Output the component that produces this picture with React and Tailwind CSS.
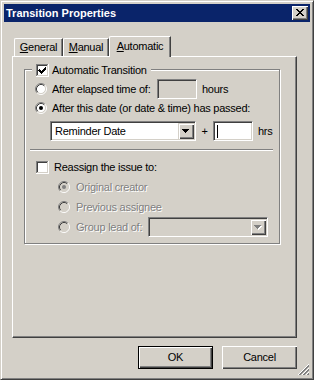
import React from "react";

const sunken =
  "border border-t-[#808080] border-l-[#808080] border-r-white border-b-white shadow-[inset_1px_1px_#404040,inset_-1px_-1px_#d4d0c8]";
const raised =
  "shadow-[inset_1px_1px_#d4d0c8,inset_2px_2px_#fff,inset_-1px_-1px_#404040,inset_-2px_-2px_#808080]";
const dim = "text-[#808080] [text-shadow:1px_1px_0_#fff]";

function Radio({ checked, disabled }) {
  return (
    <svg width="12" height="12" viewBox="0 0 12 12" className="shrink-0">
      <circle cx="6" cy="6" r="4.5" fill={disabled ? "#d4d0c8" : "#fff"} />
      <path d="M2.11 9.89A5.5 5.5 0 0 1 9.89 2.11" fill="none" stroke="#808080" />
      <path d="M9.89 2.11A5.5 5.5 0 0 1 2.11 9.89" fill="none" stroke="#fff" />
      <path d="M2.82 9.18A4.5 4.5 0 0 1 9.18 2.82" fill="none" stroke="#404040" />
      <path d="M9.18 2.82A4.5 4.5 0 0 1 2.82 9.18" fill="none" stroke="#d4d0c8" />
      {checked && (
        <circle cx="6" cy="6" r="2" fill={disabled ? "#808080" : "#000"} />
      )}
    </svg>
  );
}

function Check({ checked }) {
  return (
    <svg width="13" height="13" viewBox="0 0 13 13" className="shrink-0" shapeRendering="crispEdges">
      <rect x="0" y="0" width="13" height="13" fill="#fff" />
      <rect x="0" y="0" width="12" height="1" fill="#808080" />
      <rect x="0" y="0" width="1" height="12" fill="#808080" />
      <rect x="1" y="1" width="10" height="1" fill="#404040" />
      <rect x="1" y="1" width="1" height="10" fill="#404040" />
      <rect x="1" y="11" width="11" height="1" fill="#d4d0c8" />
      <rect x="11" y="1" width="1" height="11" fill="#d4d0c8" />
      {checked && (
        <path
          d="M3 5h1v1h1v1h1v-1h1v-1h1v-1h1v-1h1v3h-1v1h-1v1h-1v1h-1v1h-1v-1h-1v-1h-1v-1h-1z"
          fill="#000"
        />
      )}
    </svg>
  );
}

function Arrow({ disabled }) {
  const c = disabled ? "#808080" : "#000";
  return (
    <svg width="8" height="5" viewBox="0 0 8 5" shapeRendering="crispEdges">
      {disabled && (
        <g fill="#fff">
          <rect x="1" y="1" width="7" height="1" />
          <rect x="2" y="2" width="5" height="1" />
          <rect x="3" y="3" width="3" height="1" />
          <rect x="4" y="4" width="1" height="1" />
        </g>
      )}
      <g fill={c}>
        <rect x="0" y="0" width="7" height="1" />
        <rect x="1" y="1" width="5" height="1" />
        <rect x="2" y="2" width="3" height="1" />
        <rect x="3" y="3" width="1" height="1" />
      </g>
    </svg>
  );
}

function Combo({ width, text, disabled }) {
  return (
    <div
      className={`${sunken} ${width} h-[20px] flex items-center p-[1px] ${
        disabled ? "bg-[#d4d0c8]" : "bg-white"
      }`}
    >
      <span className="flex-1 pl-[3px]">{text}</span>
      <div className={`${raised} bg-[#d4d0c8] w-[16px] h-[16px] flex items-center justify-center`}>
        <Arrow disabled={disabled} />
      </div>
    </div>
  );
}

export default function App() {
  return (
    <div className="w-[314px] h-[380px] bg-[#d4d0c8] font-['Liberation_Sans',Arial,sans-serif] text-[11px] leading-none tracking-[-0.25px] text-black select-none">
      <div className="relative w-full h-full border border-t-[#d4d0c8] border-l-[#d4d0c8] border-r-[#404040] border-b-[#404040] shadow-[inset_1px_1px_#fff,inset_-1px_-1px_#808080] p-[3px] flex flex-col">
        {/* title bar */}
        <div className="h-[18px] bg-[#0a246a] flex items-center justify-between pl-[2px] pr-[2px]">
          <span className="text-white font-bold tracking-normal">Transition Properties</span>
          <div className="w-[16px] h-[14px] bg-[#d4d0c8] flex items-start justify-center pt-[3px] shadow-[inset_1px_1px_#fff,inset_-1px_-1px_#404040,inset_-2px_-2px_#808080]">
            <svg width="8" height="7" viewBox="0 0 8 7" shapeRendering="crispEdges">
              <g fill="#000">
                <rect x="0" y="0" width="2" height="1" />
                <rect x="6" y="0" width="2" height="1" />
                <rect x="1" y="1" width="2" height="1" />
                <rect x="5" y="1" width="2" height="1" />
                <rect x="2" y="2" width="4" height="1" />
                <rect x="3" y="3" width="2" height="1" />
                <rect x="2" y="4" width="4" height="1" />
                <rect x="1" y="5" width="2" height="1" />
                <rect x="5" y="5" width="2" height="1" />
                <rect x="0" y="6" width="2" height="1" />
                <rect x="6" y="6" width="2" height="1" />
              </g>
            </svg>
          </div>
        </div>

        {/* tabs */}
        <div className="mt-[14px] h-[20px] flex items-end pl-[10px]">
          <div className="w-[49px] h-[18px] border-t border-l border-white border-r border-r-[#404040] shadow-[inset_-1px_0_#808080] rounded-tl-[2px] flex items-center justify-center">
            <span><u>G</u>eneral</span>
          </div>
          <div className="w-[46px] h-[18px] border-t border-l border-white border-r border-r-[#404040] shadow-[inset_-1px_0_#808080] rounded-tl-[2px] flex items-center justify-center">
            <span><u>M</u>anual</span>
          </div>
          <div className="relative w-[62px] h-[21px] -mb-px bg-[#d4d0c8] border-t border-l border-white border-r border-r-[#404040] shadow-[inset_-1px_0_#808080] rounded-tl-[2px] flex items-center justify-center pb-[2px]">
            <span><u>A</u>utomatic</span>
          </div>
        </div>

        {/* tab panel */}
        <div className="ml-[8px] w-[285px] h-[282px] border border-t-white border-l-white border-r-[#404040] border-b-[#404040] shadow-[inset_-1px_-1px_#808080] pt-[12px] pl-[11px]">
          <div className="w-[256px] h-[175px] border border-[#808080] shadow-[1px_1px_#fff,inset_1px_1px_#fff] flex flex-col">
            <div className="-mt-[6px] ml-[7px] self-start px-[4px] h-[13px] bg-[#d4d0c8] flex items-center gap-[3px]">
              <Check checked />
              <span>Automatic Transition</span>
            </div>

            <div className="mt-[2px] h-[20px] pl-[10px] flex items-center">
              <Radio />
              <span className="ml-[5px] w-[105px]">After elapsed time of:</span>
              <div className={`${sunken} w-[40px] h-[20px] bg-[#d4d0c8]`} />
              <span className="ml-[5px]">hours</span>
            </div>

            <div className="h-[18px] pl-[10px] flex items-center">
              <Radio checked />
              <span className="ml-[5px]">After this date (or date &amp; time) has passed:</span>
            </div>

            <div className="mt-[4px] h-[20px] pl-[25px] flex items-center">
              <Combo width="w-[146px]" text="Reminder Date" />
              <span className="w-[17px] text-center">+</span>
              <div className={`${sunken} w-[40px] h-[20px] bg-white flex items-center pl-[3px]`}>
                <div className="w-px h-[13px] bg-black" />
              </div>
              <span className="ml-[5px]">hrs</span>
            </div>

            <div className="mt-[8px] ml-[5px] w-[243px] h-[2px] border-t border-t-[#808080] border-b border-b-white" />

            <div className="mt-[10px] h-[13px] pl-[11px] flex items-center">
              <Check />
              <span className="ml-[5px]">Reassign the issue to:</span>
            </div>

            <div className="mt-[3px] h-[20px] pl-[33px] flex items-center">
              <Radio checked disabled />
              <span className={`ml-[6px] ${dim}`}>Original creator</span>
            </div>
            <div className="h-[20px] pl-[33px] flex items-center">
              <Radio disabled />
              <span className={`ml-[6px] ${dim}`}>Previous assignee</span>
            </div>
            <div className="h-[20px] pl-[33px] flex items-center">
              <Radio disabled />
              <span className={`ml-[6px] w-[72px] ${dim}`}>Group lead of:</span>
              <Combo width="w-[120px]" text="" disabled />
            </div>
          </div>
        </div>

        {/* buttons */}
        <div className="mt-[8px] flex justify-end gap-[9px] pr-[13px]">
          <div className="w-[75px] h-[23px] border border-black bg-[#d4d0c8] shadow-[inset_1px_1px_#fff,inset_-1px_-1px_#404040,inset_-2px_-2px_#808080] flex items-center justify-center">
            OK
          </div>
          <div className="w-[75px] h-[23px] bg-[#d4d0c8] shadow-[inset_1px_1px_#fff,inset_-1px_-1px_#404040,inset_-2px_-2px_#808080] flex items-center justify-center">
            Cancel
          </div>
        </div>

        {/* size grip */}
        <svg
          className="absolute right-[3px] bottom-[3px]"
          width="12"
          height="12"
          viewBox="0 0 12 12"
        >
          <path d="M11 1L1 11M11 2L2 11" stroke="#808080" />
          <path d="M11 5L5 11M11 6L6 11" stroke="#808080" />
          <path d="M11 9L9 11M11 10L10 11" stroke="#808080" />
          <path d="M11 0L0 11M11 4L4 11M11 8L8 11" stroke="#fff" />
        </svg>
      </div>
    </div>
  );
}
